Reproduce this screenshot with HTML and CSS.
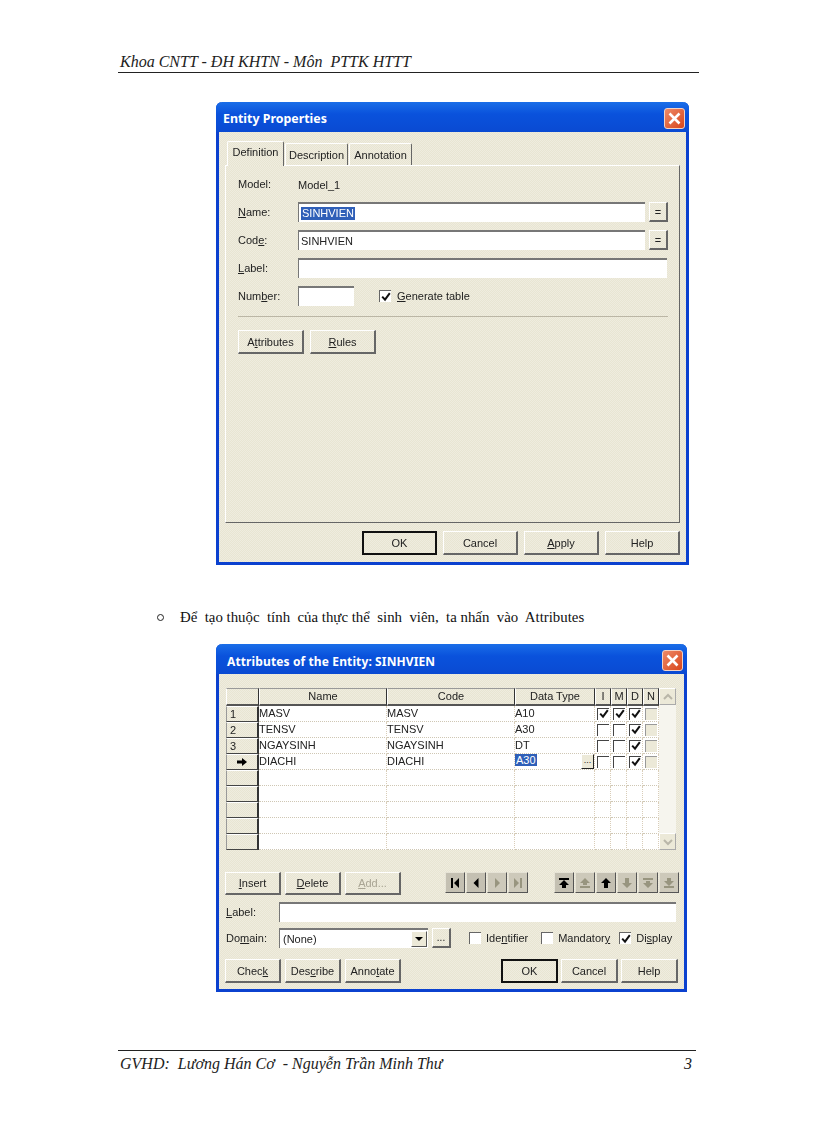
FILE: index.html
```html
<!DOCTYPE html>
<html lang="vi">
<head>
<meta charset="utf-8">
<title>Khoa CNTT - PTTK HTTT</title>
<link rel="stylesheet" href="styles.css">
</head>
<body>
<svg class="defs" width="0" height="0" aria-hidden="true">
  <symbol id="tick" viewBox="0 0 10 10"><path d="M1.2 4.6l2.8 3 4.8-6.4" fill="none" stroke="#111" stroke-width="2"/></symbol>
  <symbol id="close" viewBox="0 0 21 21"><path d="M5.5 5.5l10 10M15.5 5.5l-10 10" fill="none" stroke="#fff" stroke-width="2.6"/></symbol>
  <symbol id="arrow" viewBox="0 0 12 10"><path d="M1 3.5h5V1l5 4-5 4V6.500H1z" fill="#000"/></symbol>
  <symbol id="chev-up" viewBox="0 0 10 10"><path d="M1 7l4-4 4 4" fill="none" stroke="#b9b6a8" stroke-width="2"/></symbol>
  <symbol id="chev-down" viewBox="0 0 10 10"><path d="M1 3l4 4 4-4" fill="none" stroke="#b9b6a8" stroke-width="2"/></symbol>
  <symbol id="first" viewBox="0 0 20 20"><path d="M6 5h2v10H6zM14 5v10l-5-5z"/></symbol>
  <symbol id="prev" viewBox="0 0 20 20"><path d="M12.500 5v10l-5-5z"/></symbol>
  <symbol id="next" viewBox="0 0 20 20"><path d="M8 5v10l5-5z"/></symbol>
  <symbol id="last" viewBox="0 0 20 20"><path d="M12 5h2v10h-2zM6 5v10l5-5z"/></symbol>
  <symbol id="top" viewBox="0 0 20 20"><path d="M5 5h10v2H5zM10 7l5 5h-3v3H8v-3H5z"/></symbol>
  <symbol id="pgup" viewBox="0 0 20 20"><path d="M10 5l5 5h-3v2H8v-2H5zM5 13h10v2H5z"/></symbol>
  <symbol id="up" viewBox="0 0 20 20"><path d="M10 5l5 5h-3v5H8v-5H5z"/></symbol>
  <symbol id="down" viewBox="0 0 20 20"><path d="M8 5h4v5h3l-5 5-5-5h3z"/></symbol>
  <symbol id="pgdn" viewBox="0 0 20 20"><path d="M5 5h10v2H5zM8 8h4v2h3l-5 5-5-5h3z"/></symbol>
  <symbol id="bottom" viewBox="0 0 20 20"><path d="M8 5h4v3h3l-5 5-5-5h3zM5 13h10v2H5z"/></symbol>
</svg>
<div class="page">
  <header class="page-head">Khoa CNTT - ĐH KHTN - Môn  PTTK HTTT</header>

  <section class="dialog entity">
    <div class="titlebar"><span class="title">Entity Properties</span><span class="close"><svg width="21" height="21"><use href="#close"/></svg></span></div>
    <div class="dialog-body">
      <div class="tabs">
        <span class="tab active">Definition</span>
        <span class="tab">Description</span>
        <span class="tab">Annotation</span>
      </div>
      <div class="panel">
        <div class="form">
          <span class="lbl">Model:</span><span class="val">Model_1</span>
          <span class="lbl"><u>N</u>ame:</span><div class="field-row"><span class="input grow"><span class="sel">SINHVIEN</span></span><span class="btn eq">=</span></div>
          <span class="lbl">Cod<u>e</u>:</span><div class="field-row"><span class="input grow">SINHVIEN</span><span class="btn eq">=</span></div>
          <span class="lbl"><u>L</u>abel:</span><div class="field-row"><span class="input grow wide"></span></div>
          <span class="lbl">Num<u>b</u>er:</span><div class="field-row"><span class="input num"></span><span class="check-label gen"><span class="box"><svg width="10" height="10"><use href="#tick"/></svg></span><span><u>G</u>enerate table</span></span></div>
        </div>
        <div class="sep"></div>
        <div class="panel-btns">
          <span class="btn pb">A<u>t</u>tributes</span>
          <span class="btn pb"><u>R</u>ules</span>
        </div>
      </div>
      <div class="foot">
        <span class="btn fb default">OK</span>
        <span class="btn fb">Cancel</span>
        <span class="btn fb"><u>A</u>pply</span>
        <span class="btn fb">Help</span>
      </div>
    </div>
  </section>

  <p class="bullet-line"><span class="bullet"></span><span class="bullet-text">Để  tạo thuộc  tính  của thực thể  sinh  viên,  ta nhấn  vào  Attributes</span></p>

  <section class="dialog attrs">
    <div class="titlebar"><span class="title spaced">Attributes of the Entity: SINHVIEN</span><span class="close"><svg width="21" height="21"><use href="#close"/></svg></span></div>
    <div class="dialog-body">
      <div class="grid-wrap">
        <table class="grid">
          <colgroup><col class="c-h"><col class="c-n"><col class="c-n"><col class="c-t"><col class="c-f"><col class="c-f"><col class="c-f"><col class="c-f"></colgroup>
          <thead><tr><th></th><th>Name</th><th>Code</th><th>Data Type</th><th>I</th><th>M</th><th>D</th><th>N</th></tr></thead>
          <tbody>
            <tr><th class="rh">1</th><td>MASV</td><td>MASV</td><td>A10</td><td class="f"><span class="ck"><svg width="10" height="10"><use href="#tick"/></svg></span></td><td class="f"><span class="ck"><svg width="10" height="10"><use href="#tick"/></svg></span></td><td class="f"><span class="ck"><svg width="10" height="10"><use href="#tick"/></svg></span></td><td class="f"><span class="ck dim"></span></td></tr>
            <tr><th class="rh">2</th><td>TENSV</td><td>TENSV</td><td>A30</td><td class="f"><span class="ck"></span></td><td class="f"><span class="ck"></span></td><td class="f"><span class="ck"><svg width="10" height="10"><use href="#tick"/></svg></span></td><td class="f"><span class="ck dim"></span></td></tr>
            <tr><th class="rh">3</th><td>NGAYSINH</td><td>NGAYSINH</td><td>DT</td><td class="f"><span class="ck"></span></td><td class="f"><span class="ck"></span></td><td class="f"><span class="ck"><svg width="10" height="10"><use href="#tick"/></svg></span></td><td class="f"><span class="ck dim"></span></td></tr>
            <tr><th class="rh arrow"><svg width="12" height="10"><use href="#arrow"/></svg></th><td>DIACHI</td><td>DIACHI</td><td class="cur"><span class="sel">A30</span><span class="more">...</span></td><td class="f"><span class="ck"></span></td><td class="f"><span class="ck"></span></td><td class="f"><span class="ck"><svg width="10" height="10"><use href="#tick"/></svg></span></td><td class="f"><span class="ck dim"></span></td></tr>
            <tr><th class="rh"></th><td></td><td></td><td></td><td></td><td></td><td></td><td></td></tr>
            <tr><th class="rh"></th><td></td><td></td><td></td><td></td><td></td><td></td><td></td></tr>
            <tr><th class="rh"></th><td></td><td></td><td></td><td></td><td></td><td></td><td></td></tr>
            <tr><th class="rh"></th><td></td><td></td><td></td><td></td><td></td><td></td><td></td></tr>
            <tr><th class="rh"></th><td></td><td></td><td></td><td></td><td></td><td></td><td></td></tr>
          </tbody>
        </table>
        <div class="scroll">
          <span class="sb-btn"><svg width="10" height="10"><use href="#chev-up"/></svg></span>
          <span class="sb-btn"><svg width="10" height="10"><use href="#chev-down"/></svg></span>
        </div>
      </div>

      <div class="tool-row">
        <span class="btn tb"><u>I</u>nsert</span>
        <span class="btn tb"><u>D</u>elete</span>
        <span class="btn tb off"><u>A</u>dd...</span>
        <div class="icons nav">
          <span class="ibtn"><svg width="20" height="20"><use href="#first"/></svg></span>
          <span class="ibtn"><svg width="20" height="20"><use href="#prev"/></svg></span>
          <span class="ibtn off"><svg width="20" height="20"><use href="#next"/></svg></span>
          <span class="ibtn off"><svg width="20" height="20"><use href="#last"/></svg></span>
        </div>
        <div class="icons move">
          <span class="ibtn"><svg width="20" height="20"><use href="#top"/></svg></span>
          <span class="ibtn off"><svg width="20" height="20"><use href="#pgup"/></svg></span>
          <span class="ibtn"><svg width="20" height="20"><use href="#up"/></svg></span>
          <span class="ibtn off"><svg width="20" height="20"><use href="#down"/></svg></span>
          <span class="ibtn off"><svg width="20" height="20"><use href="#pgdn"/></svg></span>
          <span class="ibtn off"><svg width="20" height="20"><use href="#bottom"/></svg></span>
        </div>
      </div>

      <div class="label-row">
        <span class="lbl2"><u>L</u>abel:</span><span class="input grow"></span>
      </div>
      <div class="domain-row">
        <span class="lbl2">Do<u>m</u>ain:</span>
        <span class="input combo"><span class="combo-text">(None)</span><span class="combo-arrow"></span></span>
        <span class="btn dots">...</span>
        <span class="check-label c1"><span class="box"></span><span>Ide<u>n</u>tifier</span></span>
        <span class="check-label c2"><span class="box"></span><span>Mandator<u>y</u></span></span>
        <span class="check-label c3"><span class="box"><svg width="10" height="10"><use href="#tick"/></svg></span><span>Di<u>s</u>play</span></span>
      </div>
      <div class="bottom-row">
        <span class="btn tb">Chec<u>k</u></span>
        <span class="btn tb">Des<u>c</u>ribe</span>
        <span class="btn tb">Anno<u>t</u>ate</span>
        <span class="btn bb default push">OK</span>
        <span class="btn bb">Cancel</span>
        <span class="btn bb">Help</span>
      </div>
    </div>
  </section>

  <footer class="page-foot"><span>GVHD:  Lương Hán Cơ  - Nguyễn Trần Minh Thư</span><span>3</span></footer>
</div>
</body>
</html>
```
FILE: styles.css
```css
* { box-sizing: border-box; }
html, body { margin: 0; padding: 0; background: #fff; }
:root {
  --face: #ece9d8;
  --dither: repeating-conic-gradient(#efecdf 0 25%, #e8e5d2 0 50%) 0 0 / 2px 2px;
}
.defs { position: absolute; }
.page { width: 816px; height: 1123px; padding-top: 52px; overflow: hidden; color: #111; }

.page-head {
  margin: 0 117px 0 118px; height: 21px; padding-left: 2px;
  border-bottom: 1px solid #222;
  font: italic 16px/20px "Liberation Serif", serif; white-space: pre; color: #222;
}

.dialog {
  width: 473px; margin: 29px 0 0 216px;
  border: 3px solid #0b41cf; border-top: 0; border-radius: 6px 6px 0 0;
  background: var(--dither); display: flex; flex-direction: column;
  font: 11px/14px "Liberation Sans", sans-serif; color: #222;
  filter: blur(.4px);
}
.entity { height: 463px; }
.attrs { width: 471px; height: 348px; margin-top: 0; }

.titlebar {
  height: 30px; margin: 0 -3px; padding: 2px 4px 0 4px; flex: none;
  display: flex; align-items: center; justify-content: space-between;
  background: linear-gradient(#1a6ee8, #0a52dc 40%, #0a4ad2);
  border-radius: 6px 6px 0 0; color: #fff;
}
.title { font: bold 12.4px/16px "Noto Sans", sans-serif; padding: 2px 0 0 3px; }
.title.spaced { font-size: 12px; letter-spacing: .12px; padding: 3px 0 0 7px; }
.close {
  width: 21px; height: 21px; border-radius: 3px; border: 1px solid #f3d2c4;
  background: linear-gradient(135deg, #ee8a68, #d8461c);
  display: flex; align-items: center; justify-content: center;
}
.close svg { flex: none; }

.dialog-body { flex: 1; display: flex; flex-direction: column; min-height: 0; }
.entity .dialog-body { padding: 9px 6px 7px 6px; }
.attrs .dialog-body { padding: 14px 8px 6px 7px; }

.tabs { display: flex; height: 24px; padding-left: 2px; align-items: flex-end; flex: none; position: relative; z-index: 1; }
.tab {
  width: 63px; height: 22px; padding-top: 4px; margin-left: 1px; text-align: center;
  background: var(--dither); border-top: 1px solid #fff; border-left: 1px solid #fff;
  border-right: 1px solid #666; border-radius: 2px 2px 0 0;
}
.tab.active { width: 57px; height: 25px; margin-bottom: -1px; margin-left: 0; padding-top: 3px; }

.panel {
  flex: 1; padding: 8px 11px 0 12px;
  border: 1px solid #fff; border-right: 1px solid #666; border-bottom: 1px solid #666;
}
.form { display: grid; grid-template-columns: 60px 1fr; row-gap: 8px; grid-auto-rows: 20px; align-items: center; }
.lbl, .lbl2 { color: #222; }
.val { padding-top: 2px; }
.field-row { display: flex; align-items: center; height: 20px; }

.input {
  display: flex; align-items: center; height: 20px; padding-left: 2px;
  background: #fff; border-top: 2px solid #777; border-left: 1px solid #777;
  white-space: nowrap;
}
.grow { flex: 1; }
.wide { margin-right: 1px; }
.num { width: 56px; flex: none; }
.sel { background: #2f5fb8; color: #fff; padding: 0 1px; line-height: 13px; }

.btn {
  display: flex; align-items: center; justify-content: center; flex: none;
  background: var(--dither); color: #222;
  border: 1px solid #fff; border-right: 2px solid #666; border-bottom: 2px solid #666;
}
.btn.default { border: 2px solid #111; }
.eq { width: 19px; height: 20px; margin-left: 4px; font-size: 11px; }

.check-label { display: flex; align-items: center; gap: 6px; }
.gen { margin-left: 25px; }
.box {
  width: 12px; height: 12px; background: #fff; flex: none;
  border-top: 1px solid #666; border-left: 1px solid #666;
  display: flex; align-items: center; justify-content: center;
}

.sep { height: 1px; background: #bbb6a5; margin-top: 10px; }
.panel-btns { display: flex; gap: 6px; margin-top: 13px; }
.pb { width: 66px; height: 24px; }

.foot { display: flex; justify-content: flex-end; gap: 6px; margin-top: 8px; flex: none; }
.fb { width: 75px; height: 24px; }

.bullet-line { margin: 44px 0 18px 157px; height: 17px; display: flex; align-items: center; }
.bullet { width: 7px; height: 7px; border: 1px solid #222; border-radius: 50%; flex: none; }
.bullet-text { margin-left: 16px; font: 14.85px/17px "Liberation Serif", serif; white-space: pre; color: #111; }

.grid-wrap { display: flex; height: 162px; flex: none; }
.grid { border-collapse: separate; border-spacing: 0; table-layout: fixed; width: 433px; height: 162px; font-size: 11px; }
.c-h { width: 33px; } .c-n { width: 128px; } .c-t { width: 80px; } .c-f { width: 16px; }
.grid thead th {
  height: 18px; padding: 0 0 1px; font-weight: 400; text-align: center; background: var(--dither);
  border-top: 1px solid #999; border-left: 1px solid #fff;
  border-right: 1px solid #333; border-bottom: 2px solid #555;
  line-height: 12px;
}
.grid td {
  height: 16px; padding: 0 0 2px 0; background: #fff; line-height: 12px; white-space: nowrap; overflow: hidden;
  border-right: 1px dotted #d9cdb8; border-bottom: 1px dotted #cfc7b4;
}
.grid th.rh {
  height: 16px; padding: 0 0 1px 3px; font-weight: 400; text-align: left; background: var(--dither); line-height: 12px;
  border-top: 1px solid #fff; border-left: 1px solid #999;
  border-right: 2px solid #333; border-bottom: 1px solid #444;
}
.grid th.arrow { text-align: center; padding: 0; }
.grid th.arrow svg { display: block; margin: 0 auto; }
.grid td.cur { position: relative; }
.more {
  position: absolute; right: 0; top: 0; width: 13px; height: 15px; font-size: 9px; line-height: 10px; text-align: center;
  background: var(--face); border: 1px solid #fff; border-right: 1px solid #222; border-bottom: 1px solid #222;
}
.grid td.f { padding: 0; overflow: visible; }
.ck {
  display: flex; width: 12px; height: 12px; margin-left: 2px; align-items: center; justify-content: center;
  border-top: 1px solid #444; border-left: 1px solid #444; background: #fff;
}
.ck.dim { border-color: #999; background: var(--face); }

.scroll { width: 17px; height: 162px; display: flex; flex-direction: column; justify-content: space-between; background: #f6f5ee; }
.sb-btn {
  height: 17px; background: var(--face); display: flex; align-items: center; justify-content: center;
  border: 1px solid #fff; border-right-color: #aaa; border-bottom-color: #aaa;
}

.tool-row { display: flex; align-items: flex-start; margin: 22px 0 0 -1px; height: 23px; gap: 4px; flex: none; }
.tb { width: 56px; height: 23px; }
.tb.off { color: #a9a594; }
.icons { display: flex; gap: 1px; }
.nav { margin-left: 40px; }
.move { margin-left: 22px; }
.ibtn {
  width: 20px; height: 21px; background: #c4c0b2; fill: #000; display: block;
  border: 1px solid #e6e3d6; border-right: 1px solid #555; border-bottom: 1px solid #555;
  overflow: hidden;
}
.ibtn svg { display: block; margin: 0 0 0 -1px; }
.ibtn.off { background: #cdc9ba; fill: #98957f; }

.label-row { display: flex; margin-top: 7px; height: 20px; flex: none; align-items: center; }
.lbl2 { width: 53px; flex: none; }
.domain-row { display: flex; margin-top: 6px; height: 20px; flex: none; align-items: center; }
.combo { width: 149px; flex: none; padding-left: 3px; }
.combo-text { flex: 1; }
.combo-arrow {
  width: 16px; height: 16px; background: var(--face); border: 1px solid #fff; border-right: 1px solid #555; border-bottom: 1px solid #555;
  position: relative; margin-right: 1px;
}
.combo-arrow::after {
  content: ""; position: absolute; left: 3px; top: 5px;
  border: 4px solid transparent; border-top: 4px solid #000; border-bottom: 0;
}
.dots { width: 19px; height: 20px; margin-left: 4px; font-size: 10px; }
.c1 { margin-left: 18px; gap: 5px; } .c2 { margin-left: 13px; gap: 5px; } .c3 { margin-left: 9px; gap: 5px; }
.bottom-row { display: flex; gap: 4px; margin: 11px 0 0 -1px; height: 24px; flex: none; }
.bottom-row .tb { height: 24px; }
.bb { width: 57px; height: 24px; margin-left: -1px; }
.push { margin-left: 96px; }

.page-foot {
  margin: 58px 120px 0 118px; border-top: 1px solid #222;
  height: 25px; display: flex; justify-content: space-between; padding: 3px 4px 0 2px;
  font: italic 16px/20px "Liberation Serif", serif; white-space: pre; color: #222;
}
```
